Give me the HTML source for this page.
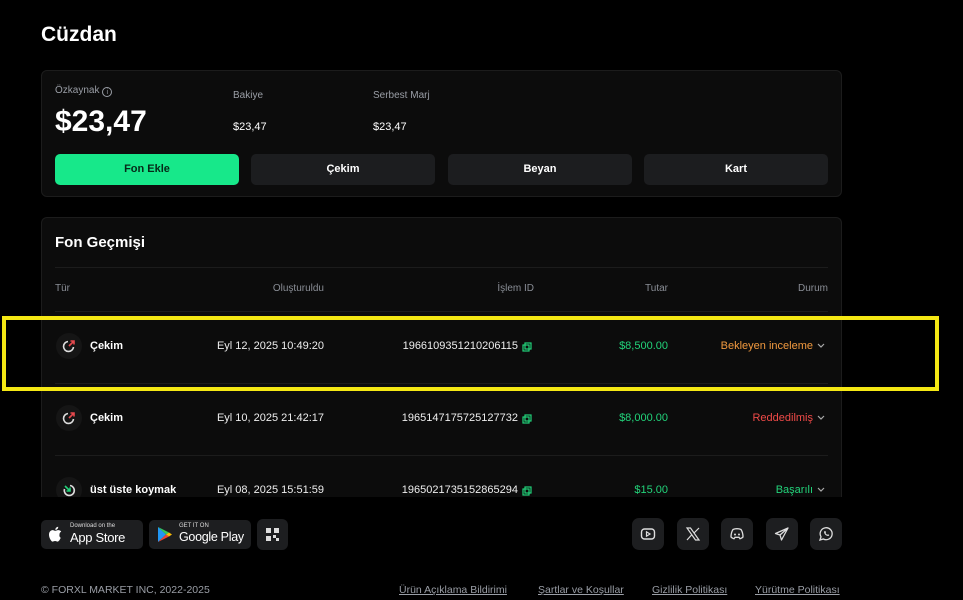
<!DOCTYPE html><html><head><meta charset="utf-8"><style>
*{box-sizing:border-box;margin:0;padding:0}
body{width:963px;height:600px;background:#000;font-family:"Liberation Sans",sans-serif;color:#fff;position:relative;overflow:hidden}
.a{position:absolute}
.card{position:absolute;left:41px;width:801px;background:#0c0c0c;border:1px solid #1c1c1c;border-radius:6px}
.btn{position:absolute;top:83px;height:31px;width:184px;border-radius:5px;background:#1c1d1f;font-size:11px;font-weight:bold;text-align:center;line-height:31px}
.lbl{font-size:10px;color:#9a9ea6}
.th{position:absolute;top:283px;font-size:10px;color:#8a8e96}
.row{font-size:11px;font-weight:bold}
.ic{position:absolute;width:26px;height:26px;border-radius:50%;background:#151515}
.sb{position:absolute;top:518px;width:32px;height:32px;border-radius:7px;background:#1d1e20}
.ft{position:absolute;top:584px;font-size:10.5px;color:#9a9ea6;text-decoration:underline}
</style></head><body>
<div class="a" style="left:41px;top:23px;font-size:21px;font-weight:bold">Cüzdan</div>
<div class="card" style="top:70px;height:127px">
 <div class="a lbl" style="left:13px;top:14px">Özkaynak <span style="display:inline-block;width:10px;height:10px;border:1px solid #9a9ea6;border-radius:50%;font-size:7px;text-align:center;line-height:9px;vertical-align:-1px">i</span></div>
 <div class="a" style="left:13px;top:34px;font-size:30px;font-weight:bold">$23,47</div>
 <div class="a lbl" style="left:191px;top:19px">Bakiye</div>
 <div class="a" style="left:191px;top:50px;font-size:11px">$23,47</div>
 <div class="a lbl" style="left:331px;top:19px">Serbest Marj</div>
 <div class="a" style="left:331px;top:50px;font-size:11px">$23,47</div>
 <div class="btn" style="left:13px;background:#17e88a;color:#062a18">Fon Ekle</div>
 <div class="btn" style="left:209px">Çekim</div>
 <div class="btn" style="left:406px">Beyan</div>
 <div class="btn" style="left:602px">Kart</div>
</div>
<div class="card" style="top:217px;height:283px;border-bottom:none;border-radius:6px 6px 0 0">
 <div class="a" style="left:13px;top:16px;font-size:15px;font-weight:bold">Fon Geçmişi</div>
 <div class="a" style="left:13px;top:49px;width:773px;height:1px;background:#1c1c1c"></div>
 <div class="a" style="left:13px;top:93px;width:773px;height:1px;background:#1c1c1c"></div>
 <div class="a" style="left:13px;top:165px;width:773px;height:1px;background:#1c1c1c"></div>
 <div class="a" style="left:13px;top:237px;width:773px;height:1px;background:#1c1c1c"></div>
</div>
<div class="th" style="left:55px">Tür</div>
<div class="th" style="left:224px;width:100px;text-align:right">Oluşturuldu</div>
<div class="th" style="left:434px;width:100px;text-align:right">İşlem ID</div>
<div class="th" style="left:568px;width:100px;text-align:right">Tutar</div>
<div class="th" style="left:728px;width:100px;text-align:right">Durum</div>

<div class="ic" style="left:56px;top:333px"></div>
<svg class="a" style="left:61px;top:338px" width="16" height="16" viewBox="0 0 16 16"><path d="M12.5 9A5 5 0 1 1 7 3.5" stroke="#ddd" stroke-width="1.6" fill="none"/><path d="M8 8L13 3M9.5 3H13V6.5" stroke="#e5484d" stroke-width="1.6" fill="none"/></svg>
<div class="a row" style="left:90px;top:340px">Çekim</div>
<div class="a row" style="left:180px;top:340px;width:144px;text-align:right;font-weight:normal;color:#eee">Eyl 12, 2025 10:49:20</div>
<div class="a row" style="left:380px;top:340px;width:138px;text-align:right;font-weight:normal;color:#eee">1966109351210206115</div>
<div class="a row" style="left:568px;top:340px;width:100px;text-align:right;color:#22d37a;font-weight:normal">$8,500.00</div>
<div class="a row" style="left:680px;top:340px;width:133px;text-align:right;color:#f29a3f;font-weight:normal">Bekleyen inceleme</div>

<div class="ic" style="left:56px;top:405px"></div>
<svg class="a" style="left:61px;top:410px" width="16" height="16" viewBox="0 0 16 16"><path d="M12.5 9A5 5 0 1 1 7 3.5" stroke="#ddd" stroke-width="1.6" fill="none"/><path d="M8 8L13 3M9.5 3H13V6.5" stroke="#e5484d" stroke-width="1.6" fill="none"/></svg>
<div class="a row" style="left:90px;top:412px">Çekim</div>
<div class="a row" style="left:180px;top:412px;width:144px;text-align:right;font-weight:normal;color:#eee">Eyl 10, 2025 21:42:17</div>
<div class="a row" style="left:380px;top:412px;width:138px;text-align:right;font-weight:normal;color:#eee">1965147175725127732</div>
<div class="a row" style="left:568px;top:412px;width:100px;text-align:right;color:#22d37a;font-weight:normal">$8,000.00</div>
<div class="a row" style="left:680px;top:412px;width:133px;text-align:right;color:#ef4a48;font-weight:normal">Reddedilmiş</div>

<div class="ic" style="left:56px;top:477px"></div>
<svg class="a" style="left:61px;top:482px" width="16" height="16" viewBox="0 0 16 16"><path d="M3.5 7A5 5 0 1 0 9 3.5" stroke="#ddd" stroke-width="1.6" fill="none"/><path d="M4 4L9 9M9 5.5V9H5.5" stroke="#22d37a" stroke-width="1.6" fill="none"/></svg>
<div class="a row" style="left:90px;top:484px">üst üste koymak</div>
<div class="a row" style="left:180px;top:484px;width:144px;text-align:right;font-weight:normal;color:#eee">Eyl 08, 2025 15:51:59</div>
<div class="a row" style="left:380px;top:484px;width:138px;text-align:right;font-weight:normal;color:#eee">1965021735152865294</div>
<div class="a row" style="left:568px;top:484px;width:100px;text-align:right;color:#22d37a;font-weight:normal">$15.00</div>
<div class="a row" style="left:680px;top:484px;width:133px;text-align:right;color:#22d37a;font-weight:normal">Başarılı</div>
<svg class="a" style="left:522px;top:342px" width="10" height="10"><rect x="3" y="1" width="6" height="6" fill="none" stroke="#22d37a" stroke-width="1.2"/><rect x="1" y="3" width="6" height="6" fill="none" stroke="#22d37a" stroke-width="1.2"/></svg>
<svg class="a" style="left:522px;top:414px" width="10" height="10"><rect x="3" y="1" width="6" height="6" fill="none" stroke="#22d37a" stroke-width="1.2"/><rect x="1" y="3" width="6" height="6" fill="none" stroke="#22d37a" stroke-width="1.2"/></svg>
<svg class="a" style="left:522px;top:486px" width="10" height="10"><rect x="3" y="1" width="6" height="6" fill="none" stroke="#22d37a" stroke-width="1.2"/><rect x="1" y="3" width="6" height="6" fill="none" stroke="#22d37a" stroke-width="1.2"/></svg>
<svg class="a" style="left:816px;top:342px" width="10" height="8"><path d="M2 2L5 5L8 2" stroke="#aaa" fill="none" stroke-width="1.2"/></svg>
<svg class="a" style="left:816px;top:414px" width="10" height="8"><path d="M2 2L5 5L8 2" stroke="#aaa" fill="none" stroke-width="1.2"/></svg>
<svg class="a" style="left:816px;top:486px" width="10" height="8"><path d="M2 2L5 5L8 2" stroke="#aaa" fill="none" stroke-width="1.2"/></svg>

<div class="a" style="left:0;top:497px;width:963px;height:103px;background:#000"></div>
<div class="a" style="left:2px;top:316px;width:937px;height:75px;border:4px solid #f5e814"></div>

<div class="a" style="left:41px;top:520px;width:102px;height:29px;background:#1d1e20;border-radius:5px">
 <svg class="a" style="left:7px;top:6px" width="14" height="16" viewBox="0 0 14 16"><path d="M11.5 8.5c0-2 1.6-2.8 1.7-2.9-1-1.4-2.4-1.5-2.9-1.5-1.2-.1-2.4.7-3 .7s-1.6-.7-2.6-.7C3.3 4.1 1 5.3 1 8.6c0 3.2 2.3 7 3.6 7 .9 0 1.4-.6 2.5-.6s1.4.6 2.5.6c1.3 0 2.8-2.9 3.1-3.9-1.7-.7-1.2-3.2-1.2-3.2zM9.5 2.9C10 2.3 10.3 1.5 10.2.7 9.5.7 8.6 1.2 8.1 1.8c-.4.5-.9 1.3-.7 2.1.8.1 1.6-.4 2.1-1z" fill="#fff"/></svg>
 <div class="a" style="left:29px;top:3px;font-size:6px;color:#ddd">Download on the</div>
 <div class="a" style="left:29px;top:10px;font-size:13px;letter-spacing:-.3px">App Store</div>
</div>
<div class="a" style="left:149px;top:520px;width:102px;height:29px;background:#1d1e20;border-radius:5px">
 <svg class="a" style="left:8px;top:6px" width="16" height="17" viewBox="0 0 16 17"><path d="M1 1L9 8.5L1 16z" fill="#2196f3"/><path d="M1 1L12 6.5L9 8.5z" fill="#34c759"/><path d="M1 16L12 10.5L9 8.5z" fill="#ea4335"/><path d="M12 6.5L15 8.5L12 10.5L9 8.5z" fill="#fbbc04"/></svg>
 <div class="a" style="left:30px;top:3px;font-size:6px;color:#ddd">GET IT ON</div>
 <div class="a" style="left:30px;top:10px;font-size:12.5px;letter-spacing:-.3px">Google Play</div>
</div>
<div class="a" style="left:257px;top:519px;width:31px;height:31px;background:#1d1e20;border-radius:6px">
 <svg class="a" style="left:9px;top:9px" width="13" height="13" viewBox="0 0 13 13" fill="#ddd"><rect x="0" y="0" width="5" height="5"/><rect x="8" y="0" width="5" height="5"/><rect x="0" y="8" width="5" height="5"/><rect x="7" y="7" width="3" height="3"/><rect x="10" y="10" width="3" height="3"/></svg>
</div>

<div class="sb" style="left:632px"><svg class="a" style="left:8px;top:8px" width="16" height="16" viewBox="0 0 16 16"><rect x="1.5" y="3" width="13" height="10" rx="3" fill="none" stroke="#ddd" stroke-width="1.4"/><path d="M6.5 5.8v4.4L10 8z" fill="none" stroke="#ddd" stroke-width="1.2"/></svg></div>
<div class="sb" style="left:677px"><svg class="a" style="left:8px;top:8px" width="16" height="16" viewBox="0 0 16 16"><path d="M2 2h3.5l8.5 12h-3.5z" fill="none" stroke="#ddd" stroke-width="1.2"/><path d="M2 14L7 8.5M9 7L14 2" stroke="#ddd" stroke-width="1.2"/></svg></div>
<div class="sb" style="left:721px"><svg class="a" style="left:8px;top:8px" width="16" height="16" viewBox="0 0 16 16"><path d="M4 3.5c1.5-.7 2.5-.8 4-.8s2.5.1 4 .8c1.3 2 2 4.5 2 7.5-1 1-2 1.5-3 1.8l-1-1.5H6l-1 1.5c-1-.3-2-.8-3-1.8 0-3 .7-5.5 2-7.5z" fill="none" stroke="#ddd" stroke-width="1.3"/><circle cx="6" cy="8.5" r="1" fill="#ddd"/><circle cx="10" cy="8.5" r="1" fill="#ddd"/></svg></div>
<div class="sb" style="left:766px"><svg class="a" style="left:8px;top:8px" width="16" height="16" viewBox="0 0 16 16"><path d="M14 2L1.5 7.5 6 9l1.5 5L14 2zM6 9l8-7" fill="none" stroke="#ddd" stroke-width="1.3" stroke-linejoin="round"/></svg></div>
<div class="sb" style="left:810px"><svg class="a" style="left:8px;top:8px" width="16" height="16" viewBox="0 0 16 16"><path d="M2 14l1-3.2A6 6 0 1 1 5.3 13z" fill="none" stroke="#ddd" stroke-width="1.3"/><path d="M6 5.5c0 2.5 2 4.5 4.5 4.5l.8-1-1.3-.8-.7.6c-.8-.4-1.4-1-1.8-1.8l.6-.7L7.3 5 6 5.5z" fill="#ddd"/></svg></div>

<div class="a" style="left:41px;top:584px;font-size:10.5px;color:#9a9ea6">© FORXL MARKET INC, 2022-2025</div>
<div class="ft" style="left:399px">Ürün Açıklama Bildirimi</div>
<div class="ft" style="left:538px">Şartlar ve Koşullar</div>
<div class="ft" style="left:652px">Gizlilik Politikası</div>
<div class="ft" style="left:755px">Yürütme Politikası</div>
</body></html>
